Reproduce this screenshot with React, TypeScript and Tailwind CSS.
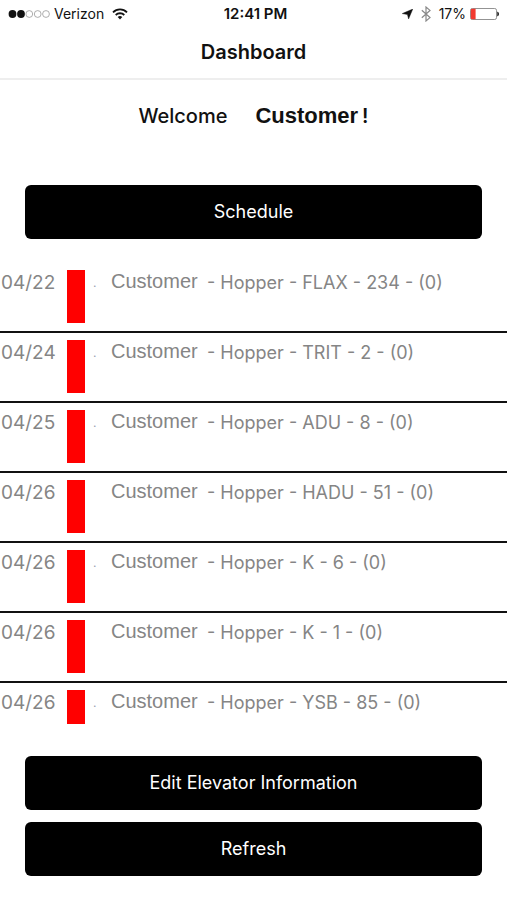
import React from "react";

const loads = [
  { date: "04/22", detail: "Hopper - FLAX - 234 - (0)", mark: true },
  { date: "04/24", detail: "Hopper - TRIT - 2 - (0)", mark: true },
  { date: "04/25", detail: "Hopper - ADU - 8 - (0)", mark: true },
  { date: "04/26", detail: "Hopper - HADU - 51 - (0)", mark: false },
  { date: "04/26", detail: "Hopper - K - 6 - (0)", mark: true },
  { date: "04/26", detail: "Hopper - K - 1 - (0)", mark: false },
  { date: "04/26", detail: "Hopper - YSB - 85 - (0)", mark: true },
];

const StatusBar = () => {
  return (
    <div className="grid grid-cols-[1fr_auto_1fr] items-center h-7 px-2 text-sm leading-5">
      {/* Signal */}
      <div className="flex items-center gap-1">
        <svg width="42" height="10" viewBox="0 0 42 10" aria-hidden="true">
          <circle cx="4.5" cy="5" r="3.9" fill="#111" />
          <circle cx="13" cy="5" r="3.9" fill="#111" />
          <circle cx="21.3" cy="5" r="3.4" fill="none" stroke="#999" strokeWidth="0.8" />
          <circle cx="29.7" cy="5" r="3.4" fill="none" stroke="#999" strokeWidth="0.8" />
          <circle cx="38" cy="5" r="3.4" fill="none" stroke="#999" strokeWidth="0.8" />
        </svg>
        <span>Verizon</span>
        <svg
          className="ml-1"
          width="16"
          height="12"
          viewBox="0 0 16 12"
          fill="none"
          stroke="#111"
          strokeWidth="1.8"
          aria-hidden="true"
        >
          <path d="M1 4.3a10 10 0 0 1 14 0" />
          <path d="M3.7 7a6.2 6.2 0 0 1 8.6 0" />
          <path d="M8 11.5 5.7 9.1a3.3 3.3 0 0 1 4.6 0z" fill="#111" stroke="none" />
        </svg>
      </div>

      <span className="pl-1 text-[15px] font-semibold">12:41 PM</span>

      {/* Location, bluetooth, battery */}
      <div className="flex items-center justify-end">
        <svg className="mr-2" width="11" height="10" viewBox="0 0 11 10" aria-hidden="true">
          <path d="M10.8 0 6.6 10 5.4 5.6.2 4.6z" fill="#111" stroke="#111" strokeWidth="0.4" />
        </svg>
        <svg
          className="mr-2"
          width="10"
          height="16"
          viewBox="0 0 10 16"
          fill="none"
          stroke="#888"
          strokeWidth="1.2"
          aria-hidden="true"
        >
          <path d="M.8 4.2 9 11.6 5 15V1l4 3.4L.8 11.8" />
        </svg>
        <span className="mr-1">17%</span>
        <svg width="29" height="12" viewBox="0 0 29 12" aria-hidden="true">
          <rect x="0.5" y="0.5" width="26" height="11" rx="1.8" fill="#fff" stroke="#777" strokeWidth="0.8" />
          <path d="M2 .8h3.6v10.4H2A1.2 1.2 0 0 1 .8 10V2A1.2 1.2 0 0 1 2 .8z" fill="#f23a30" />
          <path d="M27.6 4c1.4.4 1.4 3.6 0 4z" fill="#111" stroke="#111" strokeWidth="0.6" />
        </svg>
      </div>
    </div>
  );
};

const ActionButton = ({ children }: { children: React.ReactNode }) => {
  return (
    <button className="w-full h-[54px] rounded-md bg-black text-white text-lg">
      {children}
    </button>
  );
};

const App = () => {
  return (
    <div className="min-h-screen bg-white text-[#111] font-['Inter','Liberation_Sans',sans-serif]">
      <header className="border-b-2 border-[#eeeeee]">
        <StatusBar />
        <h1 className="pt-[10px] pb-3 text-center text-xl leading-7 font-semibold">Dashboard</h1>
      </header>

      <main>
        <p className="flex justify-center items-baseline pt-[22px] text-xl leading-7 font-medium">
          <span>Welcome</span>
          <span className="ml-7 mr-1 font-['Liberation_Sans',sans-serif] text-[22px] leading-7 font-bold">
            Customer
          </span>
          <span className="font-semibold">!</span>
        </p>

        <div className="px-[25px] pt-[55px]">
          <ActionButton>Schedule</ActionButton>
        </div>

        {/* Scheduled loads */}
        <ul className="mt-6 max-h-[461px] overflow-y-auto [scrollbar-width:none] text-[#858585]">
          {loads.map((load, index) => (
            <li
              key={index}
              className="flex h-[70px] items-start border-b-2 border-[#111] pt-[7px] leading-[26px] last:border-b-0"
            >
              <span className="w-[67px] shrink-0 pl-px text-[19px] leading-[26px]">
                {load.date}
              </span>
              <span className="w-[18px] h-[53px] shrink-0 bg-[#ff0000]" />
              <span className="w-[26px] shrink-0 pl-2 text-xs leading-[26px] text-gray-400">
                {load.mark && "."}
              </span>
              <span className="w-24 shrink-0 font-['Liberation_Sans',sans-serif] text-[20px] leading-[22px]">
                Customer
              </span>
              <span className="text-lg leading-[26px]">- {load.detail}</span>
            </li>
          ))}
        </ul>

        <div className="flex flex-col gap-3 px-[25px] pt-8 pb-6">
          <ActionButton>Edit Elevator Information</ActionButton>
          <ActionButton>Refresh</ActionButton>
        </div>
      </main>
    </div>
  );
};

export default App;
